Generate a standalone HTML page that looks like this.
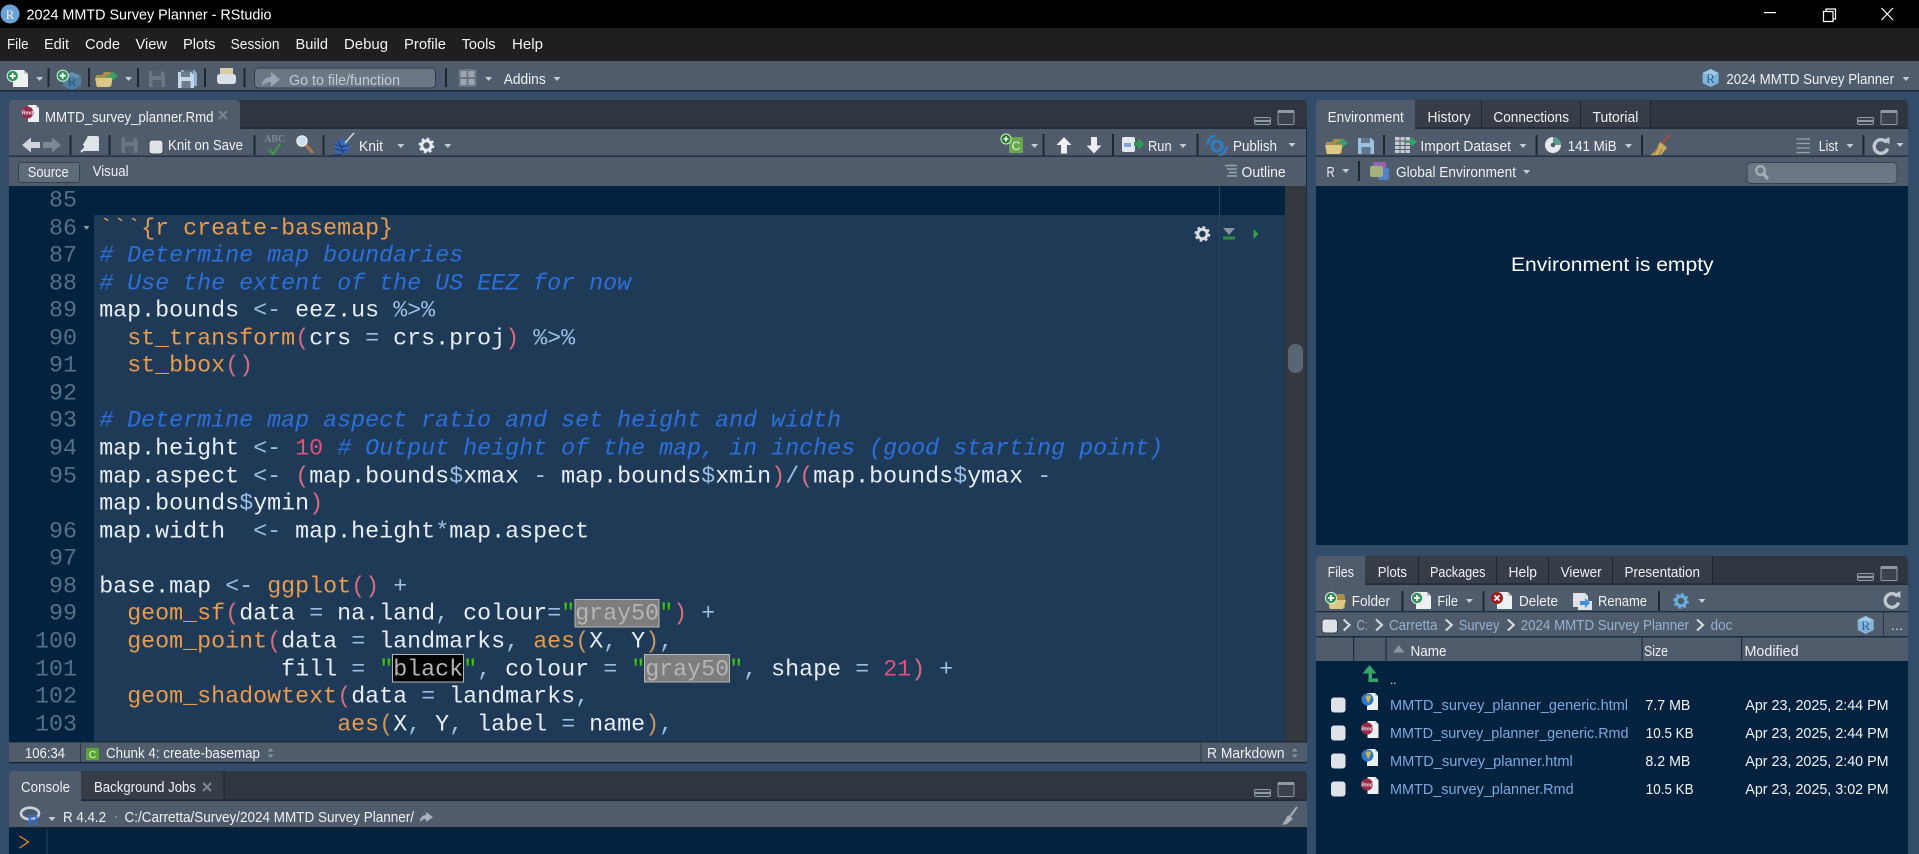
<!DOCTYPE html>
<html lang="en"><head><meta charset="utf-8"><title>2024 MMTD Survey Planner - RStudio</title>
<style>
html,body{margin:0;padding:0;background:#324c6a;width:1919px;height:854px;overflow:hidden}
svg{position:absolute;left:0;top:0;display:block}
text{font-family:"Liberation Sans",sans-serif;font-size:14.5px;fill:#eef1f4}
.m{font-size:14.5px;fill:#f0f2f4}
.g{fill:#c4cbd2}
.l{fill:#7ea8da;font-size:15px}
.d{fill:#eef2f6;font-size:15px}
.b{fill:#94b2d2;font-size:15px}
.code text,.code{font-family:"Liberation Mono",monospace;font-size:23.33px;fill:#e6edf4;white-space:pre}
.ln{font-family:"Liberation Mono",monospace;font-size:23.33px;fill:#557089;text-anchor:end}
.f{fill:#e89b4e}.o{fill:#9dbee6}.p{fill:#d66c80}.q{fill:#c8965f}.n{fill:#e0527a}
.c{fill:#2c70dc;font-style:italic}.s{fill:#3bc70f}.h{fill:#b6b6b6}
.sp{fill:#1c2732}
</style></head><body>
<svg width="1919" height="854" viewBox="0 0 1919 854" xmlns="http://www.w3.org/2000/svg">
<defs>
<path id="dd" d="M-3.5-2h7l-3.5 4z" fill="#c6ccd3"/>
<g id="plus"><circle r="5.6" fill="#2f8f55" stroke="#d9ece0" stroke-width="1"/><path d="M-3-.9h2.1V-3h1.8v2.1H3v1.8H.9V3H-.9V.9H-3z" fill="#fff"/></g>
<g id="doc"><path d="M0 0h11l4 4v13H0z" fill="#eef0f2"/><path d="M11 0l4 4h-4z" fill="#c3c8ce"/></g>
<g id="win"><rect x=".5" y=".5" width="16" height="7" rx="1.5" fill="#3a424d" stroke="#8f99a4"/><rect x="1" y="3" width="15" height="2" fill="#8f99a4"/><rect x="24" y="-6.5" width="16" height="14" rx="1" fill="#3a424d" stroke="#8f99a4"/><rect x="24" y="-7" width="16" height="3" fill="#8f99a4"/></g>
<g id="rmd"><path d="M3 0h8l3 3v14H3z" fill="#eef0f2"/><path d="M11 0l3 3h-3z" fill="#c3c8ce"/><circle cx="2.5" cy="7.5" r="6" fill="#962c4c"/><text x="2.5" y="9.3" text-anchor="middle" style="font-size:5.2px;fill:#f2dfe5;font-weight:bold">Rmd</text></g>
<g id="htm"><path d="M3 0h8l3 3v14H3z" fill="#eef0f2"/><path d="M11 0l3 3h-3z" fill="#c3c8ce"/><circle cx="3.5" cy="6.5" r="6" fill="#2f79c6"/><path d="M3 2.500c2-.5 3.500 0 4 1.500s-1.500 1.500-1.500 3-.7 3-1.500 2.500-.7-2-1.500-3-1.500-3.500.5-4z" fill="#c9b455"/></g>
<g id="hex"><path d="M0-9l8 4v10l-8 4-8-4V-5z" fill="#7fb3d9"/><path d="M0-9l8 4-8 4-8-4z" fill="#9cc8e6"/><text x="0" y="5" text-anchor="middle" style="font-family:'Liberation Serif',serif;font-size:13px;fill:#2f62a0">R</text></g>
<g id="hexd"><path d="M0-9l9 4v10l-9 4-9-4V-5z" fill="#4f7f9f"/><path d="M0-9l9 4-9 4-9-4z" fill="#618fad"/><text x="0" y="5" text-anchor="middle" style="font-family:'Liberation Serif',serif;font-size:13px;fill:#24527f">R</text></g>
<g id="floppy"><path d="M0 0h13l3 3v13H0z"/><rect x="3" y="0" width="9" height="5" fill="#4a5562" opacity=".7"/><rect x="3.5" y="9" width="9" height="7" fill="#4a5562" opacity=".7"/></g>
<g id="gear"><circle r="4.7" fill="none" stroke-width="3" stroke="currentColor"/><circle r="6.6" fill="none" stroke-width="2.6" stroke="currentColor" stroke-dasharray="2.6 2.58"/></g>
<g id="chev"><path d="M-3-5.5L3 0l-6 5.5" fill="none" stroke="#d8dee4" stroke-width="2"/></g>
<g id="ud"><path d="M-3-1.5L0-5l3 3.5zM-3 1.5L0 5l3-3.5z" fill="#8a95a1"/></g>
<g id="refresh"><path d="M5.5-3.5A6.8 6.8 0 1 0 6.5 2.5" fill="none" stroke="#c0c7ce" stroke-width="3.4"/><path d="M2-5.5l6.5-3.5v7z" fill="#c0c7ce"/></g>
<g id="folder"><path d="M0 3h6l2-3h7l1 3v11H0z" fill="#a88f4a"/><path d="M-1 6h15l3 0-3 9H1z" fill="#dcc884"/></g>
<path id="garrow" d="M0 3c2-3 4-4 7-4V-4l6 5-6 5V2C4 2 2 2 0 3z" fill="#3aa06a"/>
</defs>

<!-- frame -->
<rect width="1919" height="854" fill="#324c6a"/>
<rect width="1919" height="28" fill="#000"/>
<rect y="28" width="1919" height="33" fill="#1f1f1f"/>
<rect y="61" width="1919" height="29" fill="#505c6b"/>
<rect y="90" width="1919" height="1.5" fill="#1b2a3c"/>

<!-- title -->
<circle cx="10" cy="14" r="9.5" fill="#6ba2d6"/>
<text x="10" y="19" text-anchor="middle" style="font-family:'Liberation Serif',serif;font-size:13px;fill:#e8f1fa">R</text>
<text x="26.5" y="19.5" textLength="245" lengthAdjust="spacingAndGlyphs" style="font-size:15px;fill:#fff">2024 MMTD Survey Planner - RStudio</text>
<rect x="1764" y="12" width="12" height="1.2" fill="#fff"/>
<path d="M1823.5 11.5h9.5v10h-9.5zM1826 11.5v-2.5h9.5v10h-2.5" fill="none" stroke="#fff" stroke-width="1.2"/>
<path d="M1881.5 8l11.5 12M1893 8l-11.5 12" fill="none" stroke="#fff" stroke-width="1.2"/>

<!-- menu -->
<text class="m" x="7" y="49" textLength="21.6" lengthAdjust="spacingAndGlyphs">File</text>
<text class="m" x="44" y="49" textLength="25" lengthAdjust="spacingAndGlyphs">Edit</text>
<text class="m" x="85" y="49" textLength="35" lengthAdjust="spacingAndGlyphs">Code</text>
<text class="m" x="135.5" y="49" textLength="31.5" lengthAdjust="spacingAndGlyphs">View</text>
<text class="m" x="183" y="49" textLength="32.5" lengthAdjust="spacingAndGlyphs">Plots</text>
<text class="m" x="230.6" y="49" textLength="49" lengthAdjust="spacingAndGlyphs">Session</text>
<text class="m" x="295.5" y="49" textLength="32.5" lengthAdjust="spacingAndGlyphs">Build</text>
<text class="m" x="344" y="49" textLength="44" lengthAdjust="spacingAndGlyphs">Debug</text>
<text class="m" x="404" y="49" textLength="42" lengthAdjust="spacingAndGlyphs">Profile</text>
<text class="m" x="461.6" y="49" textLength="34" lengthAdjust="spacingAndGlyphs">Tools</text>
<text class="m" x="512" y="49" textLength="31" lengthAdjust="spacingAndGlyphs">Help</text>

<!-- main toolbar -->
<use href="#doc" x="13" y="70"/>
<use href="#plus" x="12.7" y="76"/>
<use href="#dd" x="39.6" y="79"/>
<rect class="sp" x="47.5" y="68" width="2" height="19"/>
<use href="#hexd" x="72" y="81"/>
<use href="#plus" x="62.7" y="75.7"/>
<rect class="sp" x="88" y="68" width="2" height="19"/>
<use href="#folder" x="96" y="72"/>
<use href="#garrow" x="105" y="75"/>
<use href="#dd" x="128.6" y="79"/>
<rect class="sp" x="137" y="68" width="2" height="19"/>
<use href="#floppy" x="149" y="71" fill="#6b7785"/>
<use href="#floppy" x="181" y="70" fill="#8fb0d4"/>
<use href="#floppy" x="178" y="72" fill="#c3d8ec"/>
<rect class="sp" x="204" y="68" width="2" height="19"/>
<rect x="220" y="68" width="13" height="8" fill="#d8cfa8"/>
<rect x="217" y="74" width="19" height="10" rx="3" fill="#dbe0e4"/>
<rect class="sp" x="243.5" y="68" width="2" height="19"/>
<rect x="254.5" y="68" width="181" height="20" rx="4" fill="#6b7783" stroke="#2c3b4c"/>
<path d="M262 86c0-6 4-9 9-9v-5l9 7.5-9 7.500v-5c-4 0-6 1-9 4z" fill="#9aa5af"/>
<text class="g" x="289" y="85" textLength="111" lengthAdjust="spacingAndGlyphs">Go to file/function</text>
<rect class="sp" x="445" y="68" width="2" height="19"/>
<rect x="458.5" y="69" width="18" height="18" rx="1.5" fill="#6a7581"/>
<rect x="460.5" y="71" width="6" height="6" fill="#9da6b0"/><rect x="468.5" y="71" width="6" height="6" fill="#9da6b0"/>
<rect x="460.5" y="79" width="6" height="6" fill="#9da6b0"/><rect x="468.5" y="79" width="6" height="6" fill="#9da6b0"/>
<use href="#dd" x="488.6" y="79"/>
<text x="503.7" y="84" textLength="42" lengthAdjust="spacingAndGlyphs">Addins</text>
<use href="#dd" x="557" y="79"/>
<use href="#hex" x="1710.6" y="78"/>
<text x="1726.4" y="84" textLength="167.6" lengthAdjust="spacingAndGlyphs">2024 MMTD Survey Planner</text>
<use href="#dd" x="1906" y="79"/>

<!-- EDITOR PANEL -->
<path d="M9 104a4 4 0 0 1 4-4H1303a4 4 0 0 1 4 4V128H9z" fill="#303640"/>
<rect x="9" y="128" width="1298" height="58" fill="#505c6b"/>
<path d="M9 128V104a4 4 0 0 1 4-4H236a4 4 0 0 1 4 4V129H9z" fill="#505c6b"/>
<rect x="240" y="127.5" width="1067" height="1.3" fill="#18222e"/>
<rect x="9" y="155.5" width="1298" height="1.3" fill="#1c2c3f"/>
<use href="#rmd" x="25" y="105"/>
<text x="45" y="122" textLength="168.5" lengthAdjust="spacingAndGlyphs">MMTD_survey_planner.Rmd</text>
<path d="M219 111l8 8M227 111l-8 8" stroke="#7c8792" stroke-width="2" fill="none"/>
<use href="#win" x="1254" y="117"/>

<!-- editor toolbar -->
<path d="M22 145l9-7.5V142h9v6h-9v4.5z" fill="#cfd5da"/>
<path d="M61 145l-9-7.5V142h-9v6h9v4.5z" fill="#7d8893"/>
<rect class="sp" x="69.5" y="135" width="2" height="20"/>
<path d="M87 138a2 2 0 0 1 2-2h8a2 2 0 0 1 2 2v13H84v-8z" fill="#dfe4e8"/>
<path d="M81 152l7-7m-5-.5h5.5V150" stroke="#dfe4e8" stroke-width="2" fill="none"/>
<rect class="sp" x="108.5" y="135" width="2" height="20"/>
<use href="#floppy" x="121.5" y="137" fill="#6b7785"/>
<rect x="149" y="140" width="14" height="14" rx="3" fill="#dfe3e8" stroke="#3b4552"/>
<text x="168" y="150" textLength="75" lengthAdjust="spacingAndGlyphs">Knit on Save</text>
<rect class="sp" x="253.5" y="135" width="2" height="20"/>
<text x="274.7" y="142" text-anchor="middle" textLength="21" lengthAdjust="spacingAndGlyphs" style="font-family:'Liberation Serif',serif;font-size:10px;font-weight:bold;fill:#7f8a96">ABC</text>
<path d="M269 149l4 5 7-10" fill="none" stroke="#3d9a45" stroke-width="2"/>
<circle cx="302" cy="141" r="5" fill="#c9dbee" stroke="#e8edf2" stroke-width="1.5"/>
<path d="M306 145l7 8" stroke="#a87a4a" stroke-width="3"/>
<rect class="sp" x="322.5" y="135" width="2" height="20"/>
<circle cx="342" cy="147" r="7.5" fill="#3a68b8"/>
<path d="M335 144c4 3 10 3 14 1M335 148c4 3 9 3 13 2M338 141c3 5 5 9 6 13M331 155c4 1 8-1 11-1" stroke="#1f3f78" stroke-width="1.3" fill="none"/>
<path d="M345 143l9-10" stroke="#d6dde3" stroke-width="1.5"/>
<text x="359" y="151" textLength="24" lengthAdjust="spacingAndGlyphs">Knit</text>
<use href="#dd" x="400.8" y="146"/>
<use href="#gear" x="426.5" y="145.5" color="#e6e9ec"/>
<use href="#dd" x="447.8" y="146"/>

<rect x="1009" y="137" width="14" height="16" rx="1.5" fill="#6aa84f"/>
<text x="1016" y="150" text-anchor="middle" style="font-size:12px;fill:#e8f3e2">C</text>
<circle cx="1006" cy="139" r="5" fill="#1f7a1f" stroke="#dfece0"/><path d="M1003.5 138.2h1.7v-1.7h1.6v1.7h1.7v1.6h-1.7v1.7h-1.6v-1.7h-1.7z" fill="#fff"/>
<use href="#dd" x="1034.6" y="146"/>
<rect class="sp" x="1042.5" y="134" width="2" height="22"/>
<path d="M1064 137l7.5 8h-4.5v8.5h-6V145h-4.5z" fill="#eceff2"/>
<path d="M1094 153.5l7.5-8h-4.5V137h-6v8.5h-4.5z" fill="#eceff2"/>
<rect class="sp" x="1112" y="134" width="2" height="22"/>
<rect x="1122" y="137" width="13" height="15" rx="2" fill="#e4e8ec"/>
<rect x="1124" y="143" width="7" height="4" fill="#7da7d8"/>
<path d="M1134 142h4v-4l6.5 6-6.5 6v-4h-4z" fill="#2f9a55"/>
<text x="1148" y="151" textLength="23.6" lengthAdjust="spacingAndGlyphs">Run</text>
<use href="#dd" x="1183" y="146"/>
<rect class="sp" x="1196.5" y="134" width="2" height="22"/>
<circle cx="1217" cy="146" r="5" fill="none" stroke="#2f7fc8" stroke-width="3"/>
<path d="M1207 145c2-7 5-9 8-9M1227 147c-2 6-5 8-8 8" fill="none" stroke="#2f7fc8" stroke-width="2.5"/>
<text x="1233" y="151" textLength="44" lengthAdjust="spacingAndGlyphs">Publish</text>
<use href="#dd" x="1292" y="145"/>

<!-- source row -->
<rect x="18.5" y="162.5" width="61" height="20" rx="2" fill="#5f6b79" stroke="#36424f"/>
<text x="27.7" y="177" textLength="41" lengthAdjust="spacingAndGlyphs">Source</text>
<text x="92.6" y="176" textLength="36" lengthAdjust="spacingAndGlyphs">Visual</text>
<path d="M1225 165.5h12M1227 169h10M1229 172.5h8M1227 176h10" stroke="#9aa3ad" stroke-width="1.6" fill="none"/>
<text x="1241.5" y="177" textLength="44.2" lengthAdjust="spacingAndGlyphs">Outline</text>

<!-- editor body -->
<rect x="9" y="186" width="1276" height="556" fill="#03223f"/>
<rect x="94" y="215" width="1191" height="527" fill="#1f3a56"/>
<rect x="1219" y="186" width="1" height="29" fill="#2a4560"/>
<rect x="1219" y="215" width="1" height="527" fill="#284360"/>
<rect x="1285" y="186" width="21" height="556" fill="#33383f"/>
<rect x="1288" y="344" width="15" height="29" rx="7" fill="#596572"/>
<rect x="1306" y="128" width="1" height="634" fill="#1a2a3c"/>
<rect x="9" y="741.5" width="1298" height="1.3" fill="#18222e"/>

<!-- line numbers -->
<g transform="translate(0,.6)">
<text class="ln" x="77" y="206">85</text><text class="ln" x="77" y="234">86</text><text class="ln" x="77" y="261">87</text><text class="ln" x="77" y="289">88</text><text class="ln" x="77" y="316">89</text><text class="ln" x="77" y="344">90</text><text class="ln" x="77" y="371">91</text><text class="ln" x="77" y="399">92</text><text class="ln" x="77" y="426">93</text><text class="ln" x="77" y="454">94</text><text class="ln" x="77" y="482">95</text><text class="ln" x="77" y="537">96</text><text class="ln" x="77" y="564">97</text><text class="ln" x="77" y="592">98</text><text class="ln" x="77" y="619">99</text><text class="ln" x="77" y="647">100</text><text class="ln" x="77" y="675">101</text><text class="ln" x="77" y="702">102</text><text class="ln" x="77" y="730">103</text>
</g>
<path d="M83.5 226h6l-3 4z" fill="#8b9aa9"/>

<!-- highlight boxes -->
<rect x="575" y="599.5" width="84" height="27.5" fill="#7d7d7d" stroke="#b5b5b5"/>
<rect x="392.5" y="654.5" width="71" height="27.5" fill="#000" stroke="#b5b5b5"/>
<rect x="644.5" y="654.5" width="85" height="27.5" fill="#7d7d7d" stroke="#b5b5b5"/>

<!-- source lines -->
<g class="code" transform="translate(.5,.6)">
<text x="98.7" y="234"><tspan class="f">&#96;&#96;&#96;{r create-basemap}</tspan></text>
<text x="98.7" y="261"><tspan class="c"># Determine map boundaries</tspan></text>
<text x="98.7" y="289"><tspan class="c"># Use the extent of the US EEZ for now</tspan></text>
<text x="98.7" y="316">map.bounds <tspan class="o">&lt;-</tspan> eez.us <tspan class="o">%&gt;%</tspan></text>
<text x="98.7" y="344">  <tspan class="f">st_transform</tspan><tspan class="p">(</tspan>crs <tspan class="o">=</tspan> crs.proj<tspan class="p">)</tspan> <tspan class="o">%&gt;%</tspan></text>
<text x="98.7" y="371">  <tspan class="f">st_bbox</tspan><tspan class="p">()</tspan></text>
<text x="98.7" y="426"><tspan class="c"># Determine map aspect ratio and set height and width</tspan></text>
<text x="98.7" y="454">map.height <tspan class="o">&lt;-</tspan> <tspan class="n">10</tspan> <tspan class="c"># Output height of the map, in inches (good starting point)</tspan></text>
<text x="98.7" y="482">map.aspect <tspan class="o">&lt;-</tspan> <tspan class="p">(</tspan>map.bounds<tspan class="o">$</tspan>xmax <tspan class="o">-</tspan> map.bounds<tspan class="o">$</tspan>xmin<tspan class="p">)</tspan><tspan class="o">/</tspan><tspan class="p">(</tspan>map.bounds<tspan class="o">$</tspan>ymax <tspan class="o">-</tspan></text>
<text x="98.7" y="509">map.bounds<tspan class="o">$</tspan>ymin<tspan class="p">)</tspan></text>
<text x="98.7" y="537">map.width  <tspan class="o">&lt;-</tspan> map.height<tspan class="o">*</tspan>map.aspect</text>
<text x="98.7" y="592">base.map <tspan class="o">&lt;-</tspan> <tspan class="f">ggplot</tspan><tspan class="p">()</tspan> <tspan class="o">+</tspan></text>
<text x="98.7" y="619">  <tspan class="f">geom_sf</tspan><tspan class="p">(</tspan>data <tspan class="o">=</tspan> na.land<tspan class="o">,</tspan> colour<tspan class="o">=</tspan><tspan class="s">"</tspan><tspan class="h">gray50</tspan><tspan class="s">"</tspan><tspan class="p">)</tspan> <tspan class="o">+</tspan></text>
<text x="98.7" y="647">  <tspan class="f">geom_point</tspan><tspan class="p">(</tspan>data <tspan class="o">=</tspan> landmarks<tspan class="o">,</tspan> <tspan class="f">aes</tspan><tspan class="q">(</tspan>X<tspan class="o">,</tspan> Y<tspan class="q">)</tspan><tspan class="o">,</tspan></text>
<text x="98.7" y="675">             fill <tspan class="o">=</tspan> <tspan class="s">"</tspan><tspan class="h">black</tspan><tspan class="s">"</tspan><tspan class="o">,</tspan> colour <tspan class="o">=</tspan> <tspan class="s">"</tspan><tspan class="h">gray50</tspan><tspan class="s">"</tspan><tspan class="o">,</tspan> shape <tspan class="o">=</tspan> <tspan class="n">21</tspan><tspan class="p">)</tspan> <tspan class="o">+</tspan></text>
<text x="98.7" y="702">  <tspan class="f">geom_shadowtext</tspan><tspan class="p">(</tspan>data <tspan class="o">=</tspan> landmarks<tspan class="o">,</tspan></text>
<text x="98.7" y="730">                 <tspan class="f">aes</tspan><tspan class="q">(</tspan>X<tspan class="o">,</tspan> Y<tspan class="o">,</tspan> label <tspan class="o">=</tspan> name<tspan class="q">)</tspan><tspan class="o">,</tspan></text>
</g>

<!-- chunk tools -->
<use href="#gear" x="1202.4" y="234" color="#d9dde1"/>
<path d="M1223 228h12l-6 7z" fill="#8a949e"/><rect x="1223" y="236.5" width="12" height="3" fill="#2f8f45"/>
<path d="M1253.5 229l5 5-5 5z" fill="#2fa23e"/>

<!-- status bar -->
<rect x="9" y="742.5" width="1298" height="19.5" fill="#505c6b"/>
<rect x="9" y="762" width="1298" height="1.3" fill="#18222e"/>
<text x="25" y="758" textLength="40" lengthAdjust="spacingAndGlyphs">106:34</text>
<rect x="80" y="743" width="1" height="19" fill="#2b3744"/>
<rect x="86" y="748" width="13" height="12" rx="1" fill="#5aa833"/>
<text x="92.5" y="758" text-anchor="middle" style="font-size:10.5px;fill:#e5f3dc">C</text>
<text x="106" y="758" textLength="154" lengthAdjust="spacingAndGlyphs">Chunk 4: create-basemap</text>
<use href="#ud" x="270.5" y="753"/>
<rect x="1200.5" y="743" width="1" height="19" fill="#2b3744"/>
<text x="1207" y="758" textLength="77.6" lengthAdjust="spacingAndGlyphs">R Markdown</text>
<use href="#ud" x="1294.7" y="753"/>

<!-- CONSOLE -->
<path d="M9 775a4 4 0 0 1 4-4H1303a4 4 0 0 1 4 4V800H9z" fill="#303640"/>
<path d="M81 772h143v28.5H81z" fill="#363d47"/>
<rect x="223.5" y="771" width="1" height="29" fill="#1c2430"/>
<path d="M9 801V775a4 4 0 0 1 4-4H81V801z" fill="#505c6b"/>
<rect x="81" y="799.5" width="1226" height="1.3" fill="#18222e"/>
<rect x="9" y="801" width="1298" height="26" fill="#505c6b"/>
<rect x="9" y="827" width="1298" height="1.5" fill="#18222e"/>
<rect x="9" y="828.5" width="1298" height="25.5" fill="#03223f"/>
<rect x="46.5" y="829" width="1" height="25" fill="#2a4560"/>
<text x="21" y="792" textLength="49" lengthAdjust="spacingAndGlyphs">Console</text>
<text x="94" y="792" textLength="102" lengthAdjust="spacingAndGlyphs">Background Jobs</text>
<path d="M203 783l8 8M211 783l-8 8" stroke="#7c8792" stroke-width="2" fill="none"/>
<use href="#win" x="1254" y="789"/>
<ellipse cx="30" cy="813.5" rx="9" ry="5.8" fill="none" stroke="#ccd3da" stroke-width="2.6"/>
<text x="33" y="825" text-anchor="middle" style="font-size:15px;font-weight:bold;fill:#2f6fd8">R</text>
<use href="#dd" x="52" y="819"/>
<text x="63" y="822" textLength="43" lengthAdjust="spacingAndGlyphs">R 4.4.2</text>
<circle cx="116" cy="817" r=".9" fill="#9aa5af"/>
<text x="124.5" y="822" textLength="289.5" lengthAdjust="spacingAndGlyphs">C:/Carretta/Survey/2024 MMTD Survey Planner/</text>
<path d="M420 822c0-5 3-7 6-7v-3l7 5-7 5v-3c-3 0-4 1-6 3z" fill="#aab3bc"/>
<path d="M1297 807l-8 11" stroke="#a6aeb6" stroke-width="2"/><path d="M1288 815l5 4-6 5-5 1z" fill="#a6aeb6"/>
<path d="M19.5 836l9 6-9 6" fill="none" stroke="#e58a1f" stroke-width="1.3"/>

<!-- ENV PANEL -->
<path d="M1316 104a4 4 0 0 1 4-4H1904a4 4 0 0 1 4 4V128H1316z" fill="#303640"/>
<rect x="1316" y="128" width="592" height="58" fill="#505c6b"/>
<rect x="1415" y="100.5" width="235.500" height="27.5" fill="#363d47"/>
<path d="M1316 129V104a4 4 0 0 1 4-4H1415V129z" fill="#505c6b"/>
<rect x="1415" y="127.5" width="493" height="1.3" fill="#18222e"/>
<rect x="1316" y="155.5" width="592" height="1.3" fill="#1c2c3f"/>
<rect x="1481" y="100" width="1" height="28" fill="#1c2430"/><rect x="1580" y="100" width="1" height="28" fill="#1c2430"/><rect x="1650" y="100" width="1" height="28" fill="#1c2430"/>
<text x="1327.6" y="122" textLength="76.2" lengthAdjust="spacingAndGlyphs">Environment</text>
<text x="1427.5" y="122" textLength="43" lengthAdjust="spacingAndGlyphs">History</text>
<text x="1493.4" y="122" textLength="75.6" lengthAdjust="spacingAndGlyphs">Connections</text>
<text x="1592.5" y="122" textLength="45.8" lengthAdjust="spacingAndGlyphs">Tutorial</text>
<use href="#win" x="1857" y="117"/>
<use href="#folder" x="1326" y="139"/>
<use href="#garrow" x="1335" y="142"/>
<use href="#floppy" x="1358" y="138" fill="#9cbfe4"/>
<rect class="sp" x="1383" y="135" width="2" height="20"/>
<rect x="1395" y="137" width="15" height="16" fill="#c6ccd2"/><path d="M1395 141h15M1395 145.500h15M1395 149.500h15M1400 137v16M1405 137v16" stroke="#505c6b"/>
<use href="#garrow" x="1404" y="141"/>
<text x="1420.4" y="151" textLength="90.6" lengthAdjust="spacingAndGlyphs">Import Dataset</text>
<use href="#dd" x="1523" y="146"/>
<rect class="sp" x="1535.5" y="135" width="2" height="20"/>
<circle cx="1553" cy="145" r="8" fill="#e6eaed"/><path d="M1553 137a8 8 0 0 1 8 8h-8z" fill="#5c9a8c"/><circle cx="1553" cy="145" r="2.3" fill="#505c6b"/>
<text x="1567.7" y="151" textLength="48.9" lengthAdjust="spacingAndGlyphs">141 MiB</text>
<use href="#dd" x="1628.5" y="146"/>
<rect class="sp" x="1641" y="135" width="2" height="20"/>
<path d="M1670 134l-8 10" stroke="#b24a3a" stroke-width="1.8"/>
<path d="M1660 142l7 5.500-6 7.500-10.500 .5c4-3.500 7-8 9.500-13.500z" fill="#c9a95c"/>
<path d="M1658 147l-4 7M1662 149l-3 6" stroke="#8f7436" stroke-width="1"/>
<path d="M1796.5 139h13.5M1796.5 143.5h13.5M1796.5 148h13.5M1796.5 152.5h13.5" stroke="#9aa3ad" stroke-width="1.3"/>
<text x="1818.8" y="151" textLength="19.2" lengthAdjust="spacingAndGlyphs">List</text>
<use href="#dd" x="1850" y="146"/>
<rect class="sp" x="1862.5" y="135" width="2" height="20"/>
<use href="#refresh" x="1881" y="146"/>
<use href="#dd" x="1900" y="145"/>
<text x="1326.5" y="177" textLength="8.2" lengthAdjust="spacingAndGlyphs">R</text>
<use href="#dd" x="1345.8" y="171"/>
<rect class="sp" x="1358" y="161" width="2" height="20"/>
<rect x="1373" y="162" width="13" height="14" rx="2" fill="#9a62ae"/>
<rect x="1378" y="168" width="11" height="12" rx="2" fill="#4f80c8"/>
<rect x="1370" y="166" width="13" height="11" rx="2" fill="#a3b27c"/>
<text x="1396" y="177" textLength="120" lengthAdjust="spacingAndGlyphs">Global Environment</text>
<use href="#dd" x="1526.6" y="172"/>
<rect x="1747" y="162.5" width="150" height="21" rx="4" fill="#6b7783" stroke="#36424f"/>
<circle cx="1760.5" cy="170.5" r="4.3" fill="none" stroke="#a8b0b8" stroke-width="2.2"/><path d="M1763.5 174l4.500 5" stroke="#a8b0b8" stroke-width="3"/>
<rect x="1316" y="186" width="592" height="359" fill="#03223f"/>
<text x="1511" y="271" textLength="202.6" lengthAdjust="spacingAndGlyphs" style="font-size:19.5px;fill:#fff">Environment is empty</text>

<!-- FILES PANEL -->
<path d="M1316 560a4 4 0 0 1 4-4H1904a4 4 0 0 1 4 4V584H1316z" fill="#303640"/>
<rect x="1316" y="584" width="592" height="53" fill="#505c6b"/>
<rect x="1365" y="556.5" width="347.5" height="27.5" fill="#363d47"/>
<path d="M1316 585V560a4 4 0 0 1 4-4H1365V585z" fill="#505c6b"/>
<rect x="1365" y="583.5" width="543" height="1.3" fill="#18222e"/>
<rect x="1316" y="611" width="592" height="1.3" fill="#1c2c3f"/>
<rect x="1316" y="636" width="592" height="1.5" fill="#1c2c3f"/>
<rect x="1418" y="556" width="1" height="28" fill="#1c2430"/><rect x="1496" y="556" width="1" height="28" fill="#1c2430"/><rect x="1548" y="556" width="1" height="28" fill="#1c2430"/><rect x="1612" y="556" width="1" height="28" fill="#1c2430"/><rect x="1712" y="556" width="1" height="28" fill="#1c2430"/>
<text x="1327.6" y="577" textLength="26.4" lengthAdjust="spacingAndGlyphs">Files</text>
<text x="1377.8" y="577" textLength="29.2" lengthAdjust="spacingAndGlyphs">Plots</text>
<text x="1430" y="577" textLength="55.5" lengthAdjust="spacingAndGlyphs">Packages</text>
<text x="1508.5" y="577" textLength="28.5" lengthAdjust="spacingAndGlyphs">Help</text>
<text x="1560.6" y="577" textLength="41" lengthAdjust="spacingAndGlyphs">Viewer</text>
<text x="1624.5" y="577" textLength="75.5" lengthAdjust="spacingAndGlyphs">Presentation</text>
<use href="#win" x="1857" y="573"/>

<use href="#folder" x="1329" y="594"/>
<use href="#plus" x="1331" y="598"/>
<text x="1351.7" y="606" textLength="38.3" lengthAdjust="spacingAndGlyphs">Folder</text>
<rect class="sp" x="1401.5" y="591" width="2" height="20"/>
<use href="#doc" x="1416" y="592"/>
<use href="#plus" x="1417" y="598"/>
<text x="1437.4" y="606" textLength="20.6" lengthAdjust="spacingAndGlyphs">File</text>
<use href="#dd" x="1469.4" y="601"/>
<rect class="sp" x="1482.5" y="591" width="2" height="20"/>
<use href="#doc" x="1497" y="592"/>
<circle cx="1497" cy="598" r="6" fill="#9a1f1f"/><path d="M1494.5 595.5l5 5M1499.5 595.5l-5 5" stroke="#fff" stroke-width="1.8"/>
<text x="1519" y="606" textLength="39" lengthAdjust="spacingAndGlyphs">Delete</text>
<path d="M1573 593h12l3 3v5h4v9h-14v-3h-5z" fill="#dfe3e8"/>
<path d="M1580 601h5v-3l5 5-5 5v-3h-5z" fill="#3f8fdc"/>
<text x="1598" y="606" textLength="49" lengthAdjust="spacingAndGlyphs">Rename</text>
<rect class="sp" x="1658" y="591" width="2" height="20"/>
<use href="#gear" x="1681" y="601" color="#67aee0"/>
<use href="#dd" x="1702" y="601"/>
<use href="#refresh" x="1892" y="600"/>

<rect x="1322" y="619" width="15.5" height="14" rx="3" fill="#dfe3e8" stroke="#3b4552"/>
<use href="#chev" x="1346.6" y="625"/>
<text class="b" x="1356.5" y="630" textLength="11.5" lengthAdjust="spacingAndGlyphs">C:</text>
<use href="#chev" x="1379" y="625"/>
<text class="b" x="1389" y="630" textLength="48.4" lengthAdjust="spacingAndGlyphs">Carretta</text>
<use href="#chev" x="1448.8" y="625"/>
<text class="b" x="1458.7" y="630" textLength="40.7" lengthAdjust="spacingAndGlyphs">Survey</text>
<use href="#chev" x="1510.8" y="625"/>
<text class="b" x="1520.7" y="630" textLength="168.3" lengthAdjust="spacingAndGlyphs">2024 MMTD Survey Planner</text>
<use href="#chev" x="1700" y="625"/>
<text class="b" x="1710.6" y="630" textLength="21.7" lengthAdjust="spacingAndGlyphs">doc</text>
<use href="#hex" x="1865.7" y="625"/>
<rect x="1883" y="612" width="1" height="24" fill="#2b3744"/>
<text x="1891" y="630" textLength="12" lengthAdjust="spacing" style="font-size:13px">...</text>

<rect x="1316" y="637.5" width="592" height="23.5" fill="#505c6b"/>
<rect x="1353" y="637.5" width="1.2" height="23.5" fill="#1c2c3f"/><rect x="1385.5" y="637.5" width="1.2" height="23.5" fill="#1c2c3f"/><rect x="1641.5" y="637.5" width="1.2" height="23.5" fill="#1c2c3f"/><rect x="1741" y="637.5" width="1.2" height="23.5" fill="#1c2c3f"/>
<path d="M1393 652.5l5.7-7.5 5.7 7.5z" fill="#8a95a1"/>
<text x="1410.5" y="656" textLength="36" lengthAdjust="spacingAndGlyphs">Name</text>
<text x="1644" y="656" textLength="24" lengthAdjust="spacingAndGlyphs">Size</text>
<text x="1744.5" y="656" textLength="54.1" lengthAdjust="spacingAndGlyphs">Modified</text>

<rect x="1316" y="661" width="592" height="193" fill="#03223f"/>
<path d="M1369.5 665l7 8.5h-4.5v5h6v3.500h-9.500v-8.500h-6z" fill="#35a56a"/>
<text class="d" x="1390" y="684" textLength="6.5" lengthAdjust="spacing" style="font-size:12px">..</text>

<rect x="1331" y="697.5" width="14.5" height="15" rx="3" fill="#dfe3e8"/>
<use href="#htm" x="1364" y="693"/>
<text class="l" x="1390" y="710" textLength="238" lengthAdjust="spacingAndGlyphs">MMTD_survey_planner_generic.html</text>
<text class="d" x="1645.4" y="710" textLength="45" lengthAdjust="spacingAndGlyphs">7.7 MB</text>
<text class="d" x="1745.3" y="710" textLength="143.3" lengthAdjust="spacingAndGlyphs">Apr 23, 2025, 2:44 PM</text>

<rect x="1331" y="725.5" width="14.5" height="15" rx="3" fill="#dfe3e8"/>
<use href="#rmd" x="1364.5" y="721"/>
<text class="l" x="1390" y="738" textLength="238.5" lengthAdjust="spacingAndGlyphs">MMTD_survey_planner_generic.Rmd</text>
<text class="d" x="1645.8" y="738" textLength="47.8" lengthAdjust="spacingAndGlyphs">10.5 KB</text>
<text class="d" x="1745.3" y="738" textLength="143.3" lengthAdjust="spacingAndGlyphs">Apr 23, 2025, 2:44 PM</text>

<rect x="1331" y="753.5" width="14.5" height="15" rx="3" fill="#dfe3e8"/>
<use href="#htm" x="1364" y="749"/>
<text class="l" x="1390" y="766" textLength="182.8" lengthAdjust="spacingAndGlyphs">MMTD_survey_planner.html</text>
<text class="d" x="1645.4" y="766" textLength="45" lengthAdjust="spacingAndGlyphs">8.2 MB</text>
<text class="d" x="1745.3" y="766" textLength="143.3" lengthAdjust="spacingAndGlyphs">Apr 23, 2025, 2:40 PM</text>

<rect x="1331" y="781.5" width="14.5" height="15" rx="3" fill="#dfe3e8"/>
<use href="#rmd" x="1364.5" y="777"/>
<text class="l" x="1390" y="794" textLength="183.6" lengthAdjust="spacingAndGlyphs">MMTD_survey_planner.Rmd</text>
<text class="d" x="1645.8" y="794" textLength="47.8" lengthAdjust="spacingAndGlyphs">10.5 KB</text>
<text class="d" x="1745.3" y="794" textLength="143.3" lengthAdjust="spacingAndGlyphs">Apr 23, 2025, 3:02 PM</text>
</svg>
</body></html>
